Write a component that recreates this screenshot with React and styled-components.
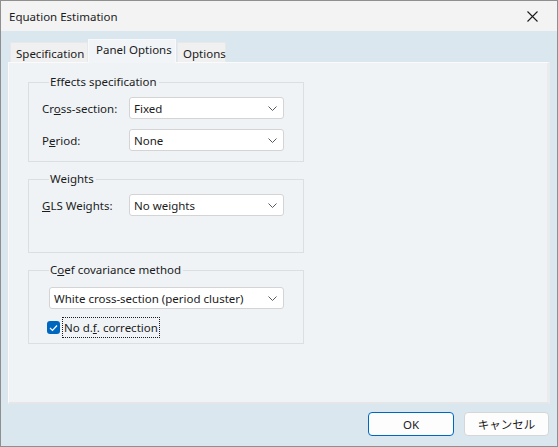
import styled, { createGlobalStyle } from 'styled-components'

const GlobalStyle = createGlobalStyle`
  html, body {
    margin: 0;
    padding: 0;
    background: #ffffff;
  }
  body {
    font-family: "Noto Sans", "Noto Sans CJK JP", sans-serif;
    font-size: 11px;
    color: #1b1b1b;
  }
`

export default function App() {
  return (
    <>
      <GlobalStyle />
      <Window>
        <TitleBar>
          <Title>Equation Estimation</Title>
          <CloseButton>
            <svg width="11" height="11" viewBox="0 0 11 11">
              <path d="M0.5 0.5 L10.5 10.5 M10.5 0.5 L0.5 10.5" stroke="#1b1b1b" strokeWidth="1.1" fill="none" />
            </svg>
          </CloseButton>
        </TitleBar>
        <Body>
          <TabStrip>
            <Tab $width={78}>Specification</Tab>
            <Tab $width={88} $active>Panel Options</Tab>
            <Tab $width={49}>Options</Tab>
          </TabStrip>
          <Panel>
            <Group $height={88}>
              <Legend>Effects specification</Legend>
              <FieldRow>
                <FieldLabel>Cr<u>o</u>ss-section:</FieldLabel>
                <Combo>Fixed<Chevron /></Combo>
              </FieldRow>
              <FieldRow>
                <FieldLabel>P<u>e</u>riod:</FieldLabel>
                <Combo>None<Chevron /></Combo>
              </FieldRow>
            </Group>
            <Group $height={82}>
              <Legend>Weights</Legend>
              <FieldRow>
                <FieldLabel><u>G</u>LS Weights:</FieldLabel>
                <Combo>No weights<Chevron /></Combo>
              </FieldRow>
            </Group>
            <Group $height={82}>
              <Legend>C<u>o</u>ef covariance method</Legend>
              <WideCombo>White cross-section (period cluster)<Chevron /></WideCombo>
              <CheckRow>
                <CheckBox>
                  <svg width="9" height="8" viewBox="0 0 9 8">
                    <path d="M1 4 L3.5 6.5 L8 1.5" stroke="#ffffff" strokeWidth="1.2" fill="none" />
                  </svg>
                </CheckBox>
                <CheckLabel>No d.<u>f</u>. correction</CheckLabel>
              </CheckRow>
            </Group>
          </Panel>
          <Footer>
            <Button $primary>OK</Button>
            <Button>キャンセル</Button>
          </Footer>
        </Body>
      </Window>
    </>
  )
}

function Chevron() {
  return (
    <ChevronIcon width="9" height="5" viewBox="0 0 9 5">
      <path d="M0.5 0.5 L4.5 4.5 L8.5 0.5" stroke="#5a5a5a" strokeWidth="1" fill="none" />
    </ChevronIcon>
  )
}

const Window = styled.div`
  width: 558px;
  height: 447px;
  box-sizing: border-box;
  border: 1px solid #8f8f8f;
  display: flex;
  flex-direction: column;
  overflow: hidden;
`

const TitleBar = styled.div`
  height: 30px;
  background: #f3f3f3;
  display: flex;
  align-items: center;
  justify-content: space-between;
  padding: 0 19px 0 8px;
`

const Title = styled.div`
  font-size: 11.5px;
  color: #1b1b1b;
`

const CloseButton = styled.div`
  display: flex;
  align-items: center;
`

const Body = styled.div`
  flex: 1;
  background: #dae7ee;
  display: flex;
  flex-direction: column;
  padding: 8px 8px 0 7px;
`

const TabStrip = styled.div`
  display: flex;
  align-items: flex-end;
  height: 23px;
  padding-left: 2px;
  position: relative;
  z-index: 1;
`

const Tab = styled.div`
  box-sizing: border-box;
  width: ${p => p.$width}px;
  height: ${p => (p.$active ? '24px' : '20px')};
  padding: ${p => (p.$active ? '2px 0 0 7px' : '3px 0 0 5px')};
  margin-bottom: ${p => (p.$active ? '-1px' : '0')};
  margin-right: ${p => (p.$active ? '1px' : '0')};
  background: ${p => (p.$active ? '#f1f5f8' : '#f0f0f0')};
  border: 1px solid ${p => (p.$active ? '#f8f9fa' : '#e6e8ea')};
  border-bottom: none;
  font-size: 11.5px;
  line-height: 15px;
  white-space: nowrap;
`

const Panel = styled.div`
  box-sizing: border-box;
  height: 342px;
  width: 542px;
  background: #eff3f6;
  border: 1px solid #fbfbfb;
  border-right: 3px solid #e9ebec;
  border-bottom: 2px solid #e4e6e8;
  padding: 11px 0 0 19px;
  display: flex;
  flex-direction: column;
  gap: 9px;
`

const Group = styled.fieldset`
  box-sizing: border-box;
  width: 276px;
  height: ${p => p.$height}px;
  margin: 0;
  padding: 7px 0 0 13px;
  border: 1px solid #dcdfe1;
  border-radius: 0;
  min-inline-size: 0;
`

const Legend = styled.legend`
  padding: 0 2px 0 1px;
  margin-left: 7px;
  font-size: 11.5px;
  line-height: 16px;
`

const FieldRow = styled.div`
  display: flex;
  align-items: center;
  height: 22px;
  margin-bottom: 10px;
`

const FieldLabel = styled.div`
  width: 87px;
  font-size: 11.5px;
`

const Combo = styled.div`
  box-sizing: border-box;
  width: 155px;
  height: 22px;
  background: #ffffff;
  border: 1px solid #d4d4d4;
  border-radius: 3px;
  display: flex;
  align-items: center;
  justify-content: space-between;
  padding: 0 6px 0 4px;
  font-size: 11.5px;
`

const WideCombo = styled(Combo)`
  width: 235px;
  margin-left: 7px;
  margin-top: 2px;
`

const ChevronIcon = styled.svg`
  flex-shrink: 0;
`

const CheckRow = styled.div`
  display: flex;
  align-items: center;
  margin-top: 8px;
  margin-left: 5px;
  gap: 2px;
`

const CheckBox = styled.div`
  width: 13px;
  height: 13px;
  border-radius: 3px;
  background: #0067c0;
  display: flex;
  align-items: center;
  justify-content: center;
`

const CheckLabel = styled.div`
  box-sizing: border-box;
  height: 21px;
  padding: 0 1px;
  border: 1px dotted #1b1b1b;
  display: flex;
  align-items: center;
  font-size: 11.5px;
`

const Footer = styled.div`
  display: flex;
  justify-content: flex-end;
  gap: 10px;
  padding-top: 8px;
`

const Button = styled.div`
  box-sizing: border-box;
  width: ${p => (p.$primary ? '86px' : '85px')};
  height: 24px;
  background: #fdfdfd;
  border: 1px solid ${p => (p.$primary ? '#0067c0' : '#d6d6d6')};
  border-radius: 4px;
  display: flex;
  align-items: center;
  justify-content: center;
  font-size: 11.5px;
`
